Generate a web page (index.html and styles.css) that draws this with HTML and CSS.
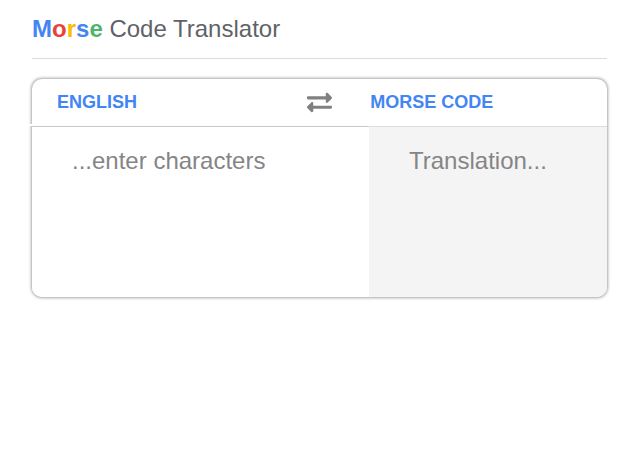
FILE: index.html
```html
<!DOCTYPE html>
<html lang="en">
<head>
<meta charset="utf-8">
<title>Morse Code Translator</title>
<link rel="stylesheet" href="styles.css">
</head>
<body>
<header class="header">
<h1 class="title"><b><span class="blue">M</span><span class="red">o</span><span class="yellow">r</span><span class="blue">s</span><span class="green">e</span></b> Code Translator</h1>
</header>
<main class="translator">
<div class="languages">
<span class="language">ENGLISH</span>
<button class="swap" aria-label="Swap languages"><svg viewBox="0 0 512 512" width="25" height="25"><path d="M0 168v-16c0-13.255 10.745-24 24-24h360V80c0-21.367 25.899-32.042 40.971-16.971l80 80c9.372 9.373 9.372 24.569 0 33.941l-80 80C409.956 271.982 384 261.456 384 240v-48H24c-13.255 0-24-10.745-24-24zm488 152H128v-48c0-21.314-25.862-32.08-40.971-16.971l-80 80c-9.372 9.373-9.372 24.569 0 33.941l80 80C102.057 463.997 128 453.437 128 432v-48h360c13.255 0 24-10.745 24-24v-16c0-13.255-10.745-24-24-24z"/></svg></button>
<span class="language target">MORSE CODE</span>
</div>
<div class="panels">
<textarea class="input" placeholder="...enter characters"></textarea>
<div class="output">Translation...</div>
</div>
</main>
</body>
</html>
```
FILE: styles.css
```css
* { box-sizing: border-box; }
body { margin: 0; min-height: 100vh; padding: 0 32px; background: #fff; font-family: "Liberation Sans", Arial, sans-serif; }
.header { height: 59px; padding-top: 15px; border-bottom: 1px solid #dcdcdc; }
.title { margin: 0; font-size: 24px; line-height: 28px; font-weight: 400; color: #5f6368; }
.blue { color: #4285f4; }
.red { color: #ea4335; }
.yellow { color: #fbbc05; }
.green { color: #51b36c; }
.translator { position: relative; margin-top: 20px; height: 218px; border-radius: 10px; box-shadow: 0 0 3px 1px #a8a8a8; }
/* break in the outline between the language bar and the input */
.translator::before { content: ""; position: absolute; left: -4px; top: 45px; width: 4px; height: 2px; background: #fff; }
.languages { display: flex; align-items: center; height: 48px; padding: 0 0 2px 25px; border-bottom: 1px solid; border-image: linear-gradient(to right, #c8c8c8 335px, #dcdcdc 337px) 1; }
.language { width: 250px; font-size: 18px; font-weight: 700; line-height: 20px; color: #4285f4; }
.target { width: auto; margin-left: 38.3px; }
.swap { display: flex; width: 25px; padding: 0; border: 0; background: none; }
.swap svg { fill: #808080; margin-top: 1px; }
.panels { display: flex; height: 170px; border-radius: 0 0 10px 10px; overflow: hidden; }
.input, .output { font: 24px/28px "Liberation Sans", Arial, sans-serif; padding: 20px 40px; }
.input { width: 337px; border: 0; outline: 0; resize: none; background: #fff; }
.input::placeholder { color: #858585; }
.output { flex: 1; background: #f4f4f4; color: #858585; }
```
